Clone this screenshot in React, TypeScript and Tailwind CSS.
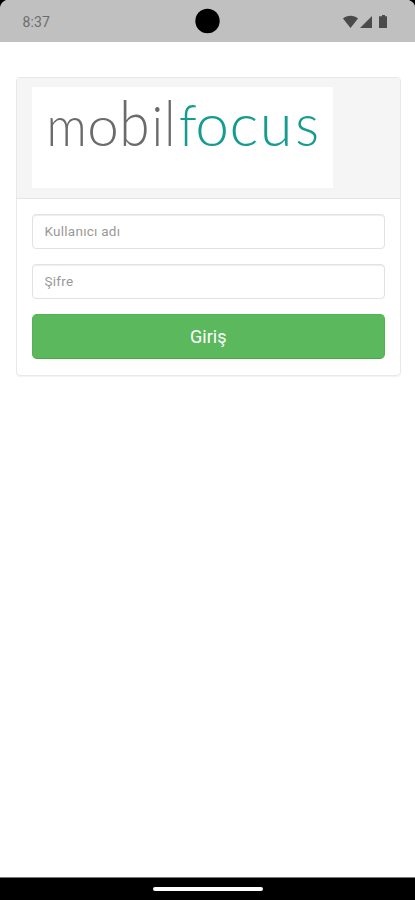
import React, { useState } from 'react';

type Glyph = {
  char: string;
  x: number;
  size: number;
  stretchX: number;
  stretchY: number;
};

// The wordmark is set letter by letter, x is the pen position inside the logo box
const MOBIL: Glyph[] = [
  { char: 'm', x: 14.6, size: 50, stretchX: 1, stretchY: 1.1 },
  { char: 'o', x: 55.3, size: 50, stretchX: 1.13, stretchY: 1.1 },
  { char: 'b', x: 87.2, size: 50, stretchX: 1.1, stretchY: 1.27 },
  { char: 'i', x: 119.7, size: 50, stretchX: 1, stretchY: 1.1 },
  { char: 'l', x: 132.5, size: 50, stretchX: 0.95, stretchY: 1.28 }
];

const FOCUS: Glyph[] = [
  { char: 'f', x: 146.9, size: 50, stretchX: 1.04, stretchY: 1.13 },
  { char: 'o', x: 163.2, size: 50, stretchX: 1.21, stretchY: 1.2 },
  { char: 'c', x: 197.5, size: 50, stretchX: 1.22, stretchY: 1.2 },
  { char: 'u', x: 227.8, size: 50, stretchX: 1.19, stretchY: 1.18 },
  { char: 's', x: 263.2, size: 50, stretchX: 1.12, stretchY: 1.2 }
];

function Letters({ glyphs }: { glyphs: Glyph[] }) {
  return (
    <>
      {glyphs.map((g) => (
        <text key={g.char} transform={`translate(${g.x} 59) scale(${g.stretchX} ${g.stretchY})`} fontSize={g.size}>
          {g.char}
        </text>
      ))}
    </>
  );
}

function Logo() {
  return (
    <svg viewBox="0 0 301 101" className="block h-[101px] w-[301px] overflow-visible bg-white font-['Lato',sans-serif] font-light" aria-label="mobilfocus">
      <g fill="#6b6b6b">
        <Letters glyphs={MOBIL} />
      </g>
      <g fill="#159c90">
        <Letters glyphs={FOCUS} />
      </g>
    </svg>
  );
}

function StatusBar() {
  return (
    <header className="relative h-[42px] bg-[#c0c0c0] text-[#4a4a4a]">
      <svg viewBox="0 0 415 42" className="absolute inset-0 h-full w-full">
        <path d="M0 0h6Q1 2 0 7z" fill="#000" />
        <path d="M415 0h-6q5 2 6 6z" fill="#000" />
        <circle cx="207.5" cy="21" r="12.2" fill="#000" />
      </svg>
      <div className="flex h-full items-center justify-between pt-0.5 pr-[27px] pl-[22.5px]">
        <span className="text-[14px] tracking-[0.1px] text-[#6c6c6c]">8:37</span>
        <svg viewBox="0 0 45 14" className="h-[14px] w-[45px]" fill="currentColor">
          <path d="M0 3.5C4-.1 11-.1 15 3.5L7.5 13z" />
          <path d="M29 1v12H17z" />
          <path d="M39 0h3v1.3h2V13h-8V1.3h3z" />
        </svg>
      </div>
    </header>
  );
}

export default function App() {
  const [userName, setUserName] = useState('');
  const [password, setPassword] = useState('');

  const inputClass =
    'block h-[35px] w-full rounded-[4px] border border-[#e2e2e2] bg-white px-3 pb-px text-[13.5px] tracking-[0.25px] text-[#555] shadow-[inset_0_1px_1px_rgba(0,0,0,0.075)] outline-none placeholder:text-[#999]';

  return (
    <div className="flex h-[900px] w-[415px] flex-col bg-white font-['Roboto',sans-serif]">
      <StatusBar />

      <main className="flex-1 pt-[35px] pr-[14px] pl-[15.5px]">
        <div className="h-[299px] rounded-[4px] border border-[#e8e8e8] shadow-[0_1px_1px_rgba(0,0,0,0.05)]">
          <div className="h-[121px] rounded-t-[3px] border-b border-[#e4e4e4] bg-[#f5f5f5] pt-[9px] pl-[15px]">
            <Logo />
          </div>
          <form className="space-y-[15px] px-[15px] pt-[15px]" onSubmit={(e) => e.preventDefault()}>
            <input
              type="text"
              value={userName}
              onChange={(e) => setUserName(e.target.value)}
              className={inputClass}
              placeholder="Kullanıcı adı"
            />
            <input
              type="password"
              value={password}
              onChange={(e) => setPassword(e.target.value)}
              className={inputClass}
              placeholder="Şifre"
            />
            <button type="submit" className="block h-[45px] w-full rounded-[5px] border border-[#52b352] border-b-[#43ab43] bg-[#5cb85c] text-[18px] text-white">
              Giriş
            </button>
          </form>
        </div>
      </main>

      <footer className="flex h-[23px] items-center justify-center border-t border-[#777] bg-black pb-px">
        <div className="h-1 w-[110px] rounded-full bg-white" />
      </footer>
    </div>
  );
}
